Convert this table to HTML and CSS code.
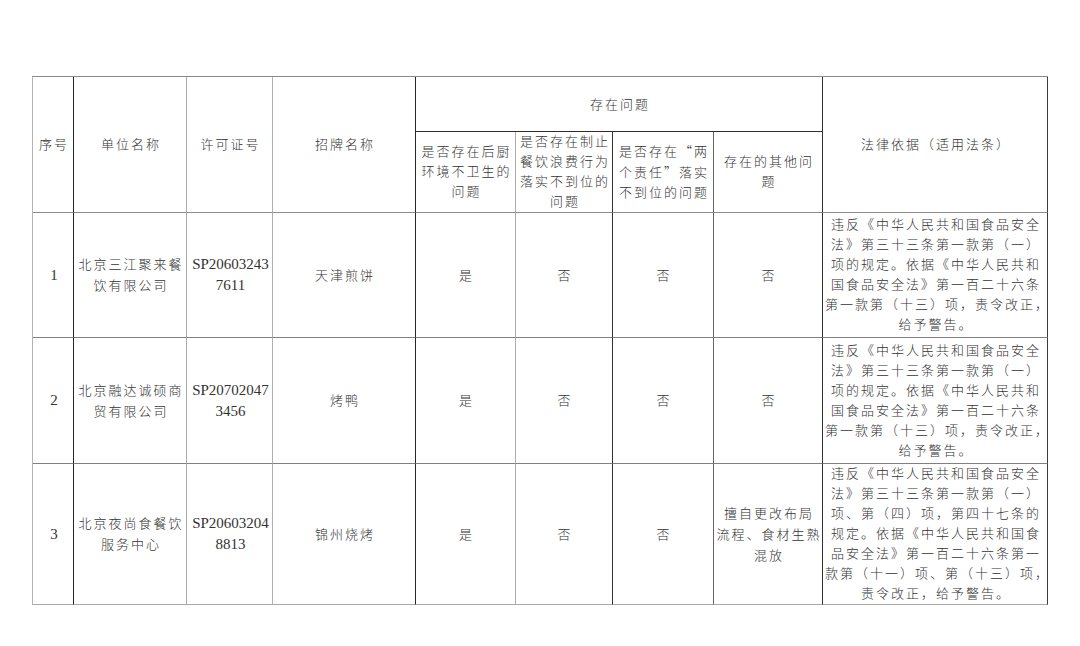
FILE: index.html
```html
<!DOCTYPE html>
<html lang="zh-CN">
<head>
<meta charset="utf-8">
<title>检查结果</title>
<link rel="stylesheet" href="styles.css">
</head>
<body>
<table class="grid">
  <colgroup>
    <col class="w1"><col class="w2"><col class="w3"><col class="w4"><col class="w5"><col class="w6"><col class="w7"><col class="w8"><col class="w9">
  </colgroup>
  <tr class="r-h1">
    <th rowspan="2" class="c1">序号</th>
    <th rowspan="2" class="c2">单位名称</th>
    <th rowspan="2" class="c3">许可证号</th>
    <th rowspan="2" class="c4">招牌名称</th>
    <th colspan="4" class="c8 group">存在问题</th>
    <th rowspan="2" class="c9">法律依据（适用法条）</th>
  </tr>
  <tr class="r-h2">
    <th class="c5">是否存在后厨<br>环境不卫生的<br>问题</th>
    <th class="c6">是否存在制止<br>餐饮浪费行为<br>落实不到位的<br>问题</th>
    <th class="c7">是否存在<span class="cjk">“</span>两<br>个责任<span class="cjk">”</span>落实<br>不到位的问题</th>
    <th class="c8">存在的其他问<br>题</th>
  </tr>
  <tr class="r-1">
    <td class="c1 num">1</td>
    <td class="c2">北京三江聚来餐<br>饮有限公司</td>
    <td class="c3 num">SP20603243<br>7611</td>
    <td class="c4">天津煎饼</td>
    <td class="c5">是</td>
    <td class="c6">否</td>
    <td class="c7">否</td>
    <td class="c8">否</td>
    <td class="c9 law">违反《中华人民共和国食品安全<br>法》第三十三条第一款第（一）<br>项的规定。依据《中华人民共和<br>国食品安全法》第一百二十六条<br>第一款第（十三）项，责令改正，<br>给予警告。</td>
  </tr>
  <tr class="r-2">
    <td class="c1 num">2</td>
    <td class="c2">北京融达诚硕商<br>贸有限公司</td>
    <td class="c3 num">SP20702047<br>3456</td>
    <td class="c4">烤鸭</td>
    <td class="c5">是</td>
    <td class="c6">否</td>
    <td class="c7">否</td>
    <td class="c8">否</td>
    <td class="c9 law">违反《中华人民共和国食品安全<br>法》第三十三条第一款第（一）<br>项的规定。依据《中华人民共和<br>国食品安全法》第一百二十六条<br>第一款第（十三）项，责令改正，<br>给予警告。</td>
  </tr>
  <tr class="r-3">
    <td class="c1 num">3</td>
    <td class="c2">北京夜尚食餐饮<br>服务中心</td>
    <td class="c3 num">SP20603204<br>8813</td>
    <td class="c4">锦州烧烤</td>
    <td class="c5">是</td>
    <td class="c6">否</td>
    <td class="c7">否</td>
    <td class="c8">擅自更改布局<br>流程、食材生熟<br>混放</td>
    <td class="c9 law">违反《中华人民共和国食品安全<br>法》第三十三条第一款第（一）<br>项、第（四）项，第四十七条的<br>规定。依据《中华人民共和国食<br>品安全法》第一百二十六条第一<br>款第（十一）项、第（十三）项，<br>责令改正，给予警告。</td>
  </tr>
</table>
</body>
</html>
```

FILE: styles.css
```css
html, body {
  margin: 0;
  padding: 0;
  background: #ffffff;
}

body {
  font-family: "Liberation Serif", "Noto Sans CJK SC", serif;
  font-size: 13px;
  font-weight: 300;
  line-height: 21px;
  letter-spacing: 2px;
  color: #333333;
}

.grid {
  margin: 76px 0 0 32px;
  border-collapse: separate;
  border-spacing: 0;
  table-layout: fixed;
  width: 1016px;
  border-top: 1px solid #8a8a8a;
  border-left: 1px solid #b4b4b4;
}

.w1 { width: 41px; }
.w2 { width: 113px; }
.w3 { width: 86px; }
.w4 { width: 143px; }
.w5 { width: 100px; }
.w6 { width: 97px; }
.w7 { width: 101px; }
.w8 { width: 109px; }
.w9 { width: 225px; }

.grid th,
.grid td {
  padding: 0 0 0 2px;
  text-align: center;
  vertical-align: middle;
  font-weight: 300;
  white-space: nowrap;
  overflow: visible;
  border-right: 1px solid #777;
  border-bottom: 1px solid #808080;
}

.r-h1 { height: 55px; }
.r-h2 { height: 81px; }
.r-h2 th { line-height: 20px; }
.r-1 { height: 125px; }
.r-2 { height: 126px; }
.r-3 { height: 141px; }

.grid .c1 { border-right-color: #262626; }
.grid .c2 { border-right-color: #ababab; }
.grid .c3 { border-right-color: #b0b0b0; }
.grid .c4 { border-right-color: #262626; }
.grid .c5 { border-right-color: #acacac; }
.grid .c6 { border-right-color: #333333; }
.grid .c7 { border-right-color: #666666; }
.grid .c8 { border-right-color: #333333; }
.grid .c9 { border-right-color: #3c3c3c; }

.grid .group { border-bottom-color: #2e2e2e; }
.r-h2 th, .r-h1 th[rowspan] { border-bottom-color: #8c8c8c; }
.r-3 td { border-bottom-color: #a8a8a8; }

.num {
  font-size: 15px;
  letter-spacing: 0;
}

.cjk {
  font-family: "Noto Sans CJK SC", sans-serif;
}

.grid .law {
  line-height: 20px;
}
```
